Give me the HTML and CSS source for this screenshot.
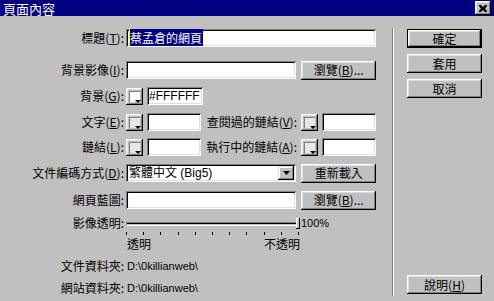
FILE: index.html
```html
<!DOCTYPE html>
<html>
<head>
    <meta charset="UTF-8">
    <title>頁面內容</title>
    <link rel="stylesheet" href="styles.css">
</head>
<body>
    <div class="titlebar">
        <span class="title">頁面內容</span>
        <div class="close">
            <svg width="8" height="7" viewBox="0 0 8 7">
                <path d="M0 0h2l2 2 2-2h2v1l-2 2.5 2 2.5v1h-2l-2-2-2 2h-2v-1l2-2.5-2-2.5z" fill="#000"/>
            </svg>
        </div>
    </div>

    <div class="main">
        <div class="form">
            <div class="row first">
                <span class="lbl">標題(<u>T</u>):</span>
                <div class="field wide"><span class="sel">蔡孟倉的網頁</span></div>
            </div>

            <div class="row r2">
                <span class="lbl">背景影像(<u>I</u>):</span>
                <div class="field mid"></div>
                <div class="btn browse">瀏覽(<u>B</u>)...</div>
            </div>

            <div class="row r3">
                <span class="lbl">背景(<u>G</u>):</span>
                <div class="swatch white"><i></i></div>
                <div class="field hex">#FFFFFF</div>
            </div>

            <div class="row r4">
                <span class="lbl">文字(<u>E</u>):</span>
                <div class="swatch"><i></i></div>
                <div class="field small"></div>
                <span class="lbl2">查閱過的鏈結(<u>V</u>):</span>
                <div class="swatch"><i></i></div>
                <div class="field small"></div>
            </div>

            <div class="row r5">
                <span class="lbl">鏈結(<u>L</u>):</span>
                <div class="swatch"><i></i></div>
                <div class="field small"></div>
                <span class="lbl2">執行中的鏈結(<u>A</u>):</span>
                <div class="swatch"><i></i></div>
                <div class="field small"></div>
            </div>

            <div class="row r6">
                <span class="lbl">文件編碼方式(<u>D</u>):</span>
                <div class="field mid select">
                    <span class="opt">繁體中文 (Big5)</span>
                    <div class="arrow">
                        <svg width="7" height="4" viewBox="0 0 7 4"><path d="M0 0h7l-3.5 4z" fill="#000"/></svg>
                    </div>
                </div>
                <div class="btn browse">重新載入</div>
            </div>

            <div class="row r7">
                <span class="lbl">網頁藍圖:</span>
                <div class="field mid"></div>
                <div class="btn browse">瀏覽(<u>B</u>)...</div>
            </div>

            <div class="row slider-row">
                <span class="lbl">影像透明:</span>
                <div class="slider">
                    <div class="track"></div>
                    <div class="thumb"></div>
                </div>
                <span class="pct">100%</span>
            </div>

            <div class="ticks">
                <i></i><i></i><i></i><i></i><i></i><i></i><i></i><i></i><i></i><i></i><i></i>
            </div>

            <div class="scale">
                <span>透明</span>
                <span>不透明</span>
            </div>

            <div class="row info">
                <span class="lbl">文件資料夾:</span>
                <span class="path">D:\0killianweb\</span>
            </div>

            <div class="row info">
                <span class="lbl">網站資料夾:</span>
                <span class="path">D:\0killianweb\</span>
            </div>
        </div>

        <div class="sep"></div>

        <div class="buttons">
            <div class="btn side default">確定</div>
            <div class="btn side">套用</div>
            <div class="btn side">取消</div>
            <div class="btn side help">說明(<u>H</u>)</div>
        </div>
    </div>
</body>
</html>
```

FILE: styles.css
```css
/* Basic Reset */
* {
    box-sizing: border-box;
    margin: 0;
    padding: 0;
}

body {
    width: 494px;
    height: 301px;
    overflow: hidden;
    background: #c0c0c0;
    color: #000;
    font-family: "Noto Sans CJK TC", sans-serif;
    font-size: 12px;
    line-height: 14px;
}

u {
    text-decoration: underline;
    text-underline-offset: 1px;
}

/* Title bar */
.titlebar {
    height: 16px;
    background: #000080;
    color: #fff;
    display: flex;
    align-items: center;
    justify-content: space-between;
    padding: 0 3px 0 3px;
}

.title {
    font-size: 13px;
    line-height: 15px;
    padding-top: 1px;
}

.close {
    width: 16px;
    height: 14px;
    background: #c0c0c0;
    display: flex;
    align-items: center;
    justify-content: center;
    box-shadow: inset -1px -1px #000, inset 1px 1px #fff, inset -2px -2px #808080, inset 2px 2px #dfdfdf;
}

/* Main layout */
.main {
    display: flex;
    height: 285px;
}

.form {
    width: 376px;
    padding-top: 13px;
    display: flex;
    flex-direction: column;
}

.row {
    display: flex;
    align-items: center;
    height: 18px;
}

.r2 { margin-top: 14px; }
.r3 { margin-top: 8px; }
.r4 { margin-top: 8px; }
.r5 { margin-top: 7px; }
.r6 { margin-top: 8px; }
.r7 { margin-top: 9px; }

.lbl {
    width: 126px;
    flex: none;
    padding-right: 2px;
    text-align: right;
    white-space: nowrap;
}

.lbl2 {
    flex: 1;
    text-align: right;
    white-space: nowrap;
    padding-right: 4px;
}

/* Sunken fields */
.field {
    height: 18px;
    background: #fff;
    box-shadow: inset 1px 1px #808080, inset -1px -1px #fff, inset 2px 2px #000, inset -2px -2px #dfdfdf;
    padding: 2px 3px;
    white-space: nowrap;
}

.field.wide { width: 250px; }
.field.mid { width: 171px; }
.field.hex {
    width: 56px;
    margin-left: 4px;
    font-family: "Liberation Sans", sans-serif;
    font-size: 12px;
    padding-left: 2px;
}
.field.small {
    width: 54px;
    margin-left: 4px;
}

.sel {
    background: #000080;
    color: #fff;
    border-left: 1px solid #ff0;
    padding-right: 1px;
}

.select {
    display: flex;
    align-items: center;
    justify-content: space-between;
    padding: 2px 2px 2px 3px;
}

.opt {
    font-family: "Liberation Sans", "Noto Sans CJK TC", sans-serif;
}

.arrow {
    width: 16px;
    height: 14px;
    display: flex;
    align-items: center;
    justify-content: center;
    background: #c0c0c0;
    box-shadow: inset -1px -1px #000, inset 1px 1px #dfdfdf, inset -2px -2px #808080, inset 2px 2px #fff;
}

/* Colour swatch buttons */
.swatch {
    width: 17px;
    height: 17px;
    flex: none;
    position: relative;
    background: #c0c0c0;
    box-shadow: inset -1px -1px #000, inset 1px 1px #fff, inset -2px -2px #808080, inset 2px 2px #dfdfdf;
}

.swatch::before {
    content: "";
    position: absolute;
    left: 3px;
    top: 3px;
    width: 10px;
    height: 10px;
    background: #e8e8e8;
    border-top: 1px solid #808080;
    border-left: 1px solid #808080;
}

.swatch.white::before {
    background: #fff;
}

.swatch i {
    position: absolute;
    right: 2px;
    bottom: 2px;
    width: 0;
    height: 0;
    border-left: 3px solid transparent;
    border-right: 3px solid transparent;
    border-top: 3px solid #000;
}

/* Raised buttons */
.btn {
    background: #c0c0c0;
    display: flex;
    align-items: center;
    justify-content: center;
    white-space: nowrap;
    box-shadow: inset -1px -1px #000, inset 1px 1px #fff, inset -2px -2px #808080, inset 2px 2px #dfdfdf;
}

.btn.browse {
    width: 75px;
    height: 19px;
    margin-left: 5px;
}

/* Slider */
.slider-row {
    margin-top: 7px;
    height: 14px;
}

.slider {
    width: 174px;
    height: 14px;
    position: relative;
    display: flex;
    align-items: center;
}

.track {
    width: 100%;
    height: 4px;
    margin-top: 1px;
    border-top: 1px solid #808080;
    border-left: 1px solid #808080;
    border-bottom: 1px solid #fff;
    border-right: 1px solid #fff;
    box-shadow: inset 0 1px #000;
}

.thumb {
    position: absolute;
    right: 0;
    top: 2px;
    width: 4px;
    height: 11px;
    background: #c0c0c0;
    box-shadow: inset -1px -1px #000, inset 1px 1px #fff;
}

.pct {
    margin-left: 1px;
    font-family: "Liberation Sans", sans-serif;
    font-size: 11px;
}

.ticks {
    display: flex;
    justify-content: space-between;
    width: 173px;
    margin-left: 126px;
    margin-top: 2px;
    height: 3px;
}

.ticks i {
    width: 1px;
    height: 3px;
    background: #000;
}

.scale {
    display: flex;
    justify-content: space-between;
    width: 173px;
    margin-left: 127px;
    margin-top: 2px;
    line-height: 14px;
}

.info {
    height: 14px;
    margin-top: 8px;
}

.path {
    font-family: "Liberation Sans", sans-serif;
    font-size: 11px;
    margin-left: 1px;
}

/* Separator and side buttons */
.sep {
    width: 2px;
    margin: 12px 0 5px 16px;
    border-left: 1px solid #808080;
    border-right: 1px solid #fff;
}

.buttons {
    display: flex;
    flex-direction: column;
    gap: 6px;
    margin-left: 13px;
    padding: 13px 0 7px;
}

.btn.side {
    width: 75px;
    height: 19px;
}

.btn.default {
    border: 1px solid #000;
}

.btn.help {
    margin-top: auto;
}
```
